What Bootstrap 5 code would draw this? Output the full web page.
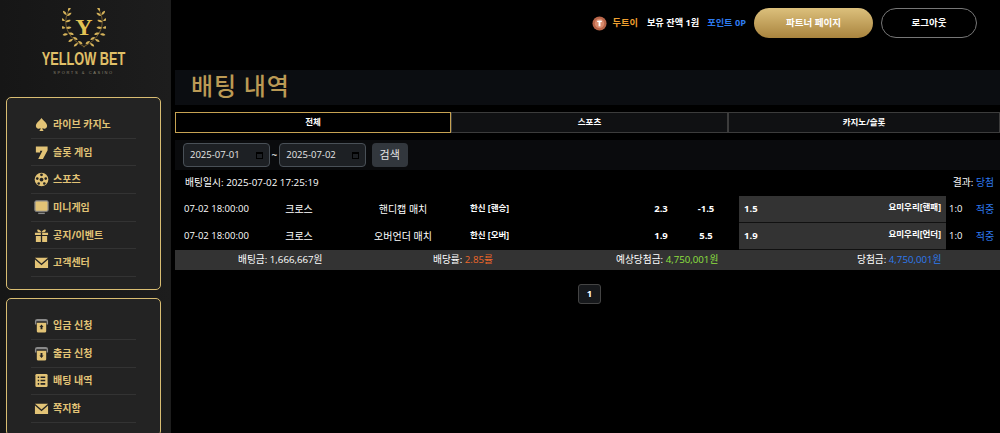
<!DOCTYPE html>
<html lang="ko">
<head>
  <meta charset="utf-8">
  <title>배팅 내역</title>
  <link href="https://cdn.jsdelivr.net/npm/bootstrap@5.3.3/dist/css/bootstrap.min.css" rel="stylesheet">
  <style>
    html, body { height: 433px; overflow: hidden; }
    body { background: #000; color: #fff; font-family: "Open Sans", "Noto Sans CJK KR", sans-serif; font-size: 9px; }
    .side-bar { width: 171px; height: 433px; flex: none; overflow: hidden; background: linear-gradient(90deg, #161616, #1d1d1d); padding: 0 10px 0 6px; }
    .logo-box { height: 97px; padding-top: 8px; text-align: center; }
    .logo-name { font-family: "Liberation Sans", sans-serif; font-weight: 700; font-size: 19px; line-height: 17px; color: #e0c068; transform: scaleX(.67); margin: 2px -10px 0; white-space: nowrap; }
    .logo-sub { font-family: "Liberation Sans", sans-serif; font-size: 4px; line-height: 6px; letter-spacing: 1.6px; color: #8c8672; margin-top: 3px; }
    .side-group { background: #232323; border: 1px solid #d9bd72; border-radius: 5px; padding: 13px 24px 12px; margin-bottom: 8px; }
    .side-link { display: flex; align-items: center; gap: 4px; height: 27.7px; color: #e2c376; font-size: 10px; font-weight: 700; text-decoration: none; border-bottom: 1px solid #333; white-space: nowrap; padding-left: 3px; }
    .side-link svg { width: 15px; height: 15px; flex: none; }
    .main-area { flex: 1; min-width: 0; padding-left: 4px; }
    .top-bar { height: 70px; padding: 8px 23px 32px 0; font-size: 9.2px; font-weight: 700; }
    .user-level { width: 15px; height: 15px; margin-right: 6px; }
    .txt-orange { color: #f0a030; }
    .txt-blue { color: #2e7bf0; }
    .user-name { margin-right: 9px; }
    .user-cash { margin-right: 8px; }
    .user-point { margin-right: 8px; }
    .btn-partner, .btn-logout { height: 30px; border-radius: 15px; font-size: 9.5px; font-weight: 700; color: #fff; padding: 0; display: flex; align-items: center; justify-content: center; }
    .btn-partner { width: 119px; margin-right: 8px; border: 0; background: linear-gradient(180deg, #dcc07c, #a9843e); }
    .btn-logout { width: 96px; background: #000; border: 1px solid #777; }
    .title-bar { height: 35px; background: #0b0d11; padding-left: 16px; color: #bb9a55; font-size: 24px; font-weight: 500; line-height: 32px; letter-spacing: .8px; }
    .tab-row { margin-top: 7px; height: 21px; }
    .tab-item { height: 21px; line-height: 17px; text-align: center; background: #101113; border: 1px solid #3c3c3c; font-size: 8.5px; font-weight: 700; color: #fff; }
    .tab-item.on { background: #000; border-color: #c6a252; }
    .tab-all { width: 276px; flex: none; }
    .tab-mid { width: 277px; flex: none; }
    .tab-other { flex: 1; }
    .filter-row { margin-top: 7px; height: 30px; background: #0a0b0d; padding-left: 8px; gap: 2px; font-size: 10px; }
    .date-box { width: 86.500px; height: 24px; background: #1d2024; border: 1px solid #495057; border-radius: 4px; padding: 0 6px; display: flex; align-items: center; justify-content: space-between; font-size: 9.5px; color: #e6e6e6; }
    .date-box i { display: block; width: 7px; height: 7px; border: 1px solid #000; border-top-width: 2px; }
    .btn-find { width: 36px; height: 24px; margin-left: 4px; background: #32373d; color: #e6e6e6; border: 0; border-radius: 4px; font-size: 11px; padding: 0; }
    .head-row { height: 26px; padding: 0 6px 0 10px; font-size: 9.8px; }
    .bet-row { height: 27px; font-size: 10px; }
    .cell-time { width: 93px; padding-left: 9px; flex: none; font-size: 9.5px; }
    .cell-kind { width: 62px; text-align: center; flex: none; }
    .cell-match { width: 123px; padding-left: 23px; text-align: center; flex: none; }
    .cell-pick { width: 187px; padding-left: 17px; flex: none; font-size: 8.5px; font-weight: 700; padding-bottom: 3px; }
    .cell-odd { width: 42px; text-align: center; flex: none; font-size: 9.5px; font-weight: 700; }
    .cell-line { width: 48px; margin-right: 9px; text-align: center; flex: none; font-size: 9.5px; font-weight: 700; }
    .cell-away { width: 207px; height: 27px; flex: none; background: #333; border-bottom: 1px solid #111; padding: 0 5px; font-weight: 700; font-size: 9.5px; display: flex; align-items: center; justify-content: space-between; }
    .cell-away span:last-child { font-size: 8.5px; padding-bottom: 3px; }
    .cell-score { width: 24px; flex: none; padding-left: 3px; font-size: 9.5px; }
    .cell-result { flex: 1; min-width: 0; text-align: center; color: #2e7bf0; white-space: nowrap; }
    .sum-row { height: 20px; background: #333; font-size: 9.7px; padding-left: 63px; }
    .sum-a { width: 195px; flex: none; white-space: nowrap; }
    .sum-b { width: 183px; flex: none; white-space: nowrap; }
    .sum-c { width: 241px; flex: none; white-space: nowrap; }
    .pager-box { margin-top: 14px; display: flex; justify-content: center; padding-left: 4px; }
    .pager-num { width: 23px; height: 20px; background: #17191c; border: 1px solid #444; border-radius: 3px; text-align: center; line-height: 18px; font-size: 9.5px; font-weight: 700; color: #fff; }
  </style>
</head>
<body>
<div class="d-flex">
  <aside class="side-bar">
    <div class="logo-box">
      <svg width="44" height="40" viewBox="0 0 44 40" style="display:block;margin:0 auto">
        <defs>
          <path id="leaf" d="M0 0 C1.800 -1.500 4 -1.500 5.500 0 C4 1.500 1.800 1.500 0 0z" fill="#d4b25a"/>
        </defs>
        <g id="wreathL">
          <path d="M7 2 C0 14 4 30 23 39" fill="none" stroke="#8a6f35" stroke-width=".8"/>
          <use href="#leaf" transform="translate(6 3) rotate(-60)"/>
          <use href="#leaf" transform="translate(4.500 7) rotate(-130)"/>
          <use href="#leaf" transform="translate(5 8) rotate(-35)"/>
          <use href="#leaf" transform="translate(3 13) rotate(-150)"/>
          <use href="#leaf" transform="translate(3.500 14) rotate(-20)"/>
          <use href="#leaf" transform="translate(3.500 20) rotate(-170)"/>
          <use href="#leaf" transform="translate(4 20) rotate(-5)"/>
          <use href="#leaf" transform="translate(6 26) rotate(170)"/>
          <use href="#leaf" transform="translate(6.500 25) rotate(15)"/>
          <use href="#leaf" transform="translate(11 31) rotate(150)"/>
          <use href="#leaf" transform="translate(11 29) rotate(30)"/>
          <use href="#leaf" transform="translate(16 35) rotate(140)"/>
          <use href="#leaf" transform="translate(16 33) rotate(35)"/>
        </g>
        <use href="#wreathL" transform="translate(44 0) scale(-1 1)"/>
        <text x="22" y="27" text-anchor="middle" fill="#e3c354" font-family="Liberation Serif" font-weight="700" font-size="24">Y</text>
      </svg>
      <div class="logo-name">YELLOW BET</div>
      <div class="logo-sub">SPORTS &amp; CASINO</div>
    </div>
    <div class="side-group">
      <a class="side-link" href="#"><svg viewBox="0 0 16 16" fill="#e2c376"><path d="M8 1C6 4 2 6 2 9.500a3 3 0 0 0 5 2.200C7 13 6.500 14 5.500 15h5C9.500 14 9 13 9 11.700a3 3 0 0 0 5-2.200C14 6 10 4 8 1z"/></svg>라이브 카지노</a>
      <a class="side-link" href="#"><svg viewBox="0 0 16 16" fill="#e2c376"><path d="M2 1.500h12.500v4L9.500 15H4.500l4.500-9H6.500v2H2z"/></svg>슬롯 게임</a>
      <a class="side-link" href="#"><svg viewBox="0 0 16 16"><circle cx="8" cy="8" r="7.300" fill="#e2c376"/><circle cx="8" cy="8" r="2" fill="#232323"/><circle cx="8" cy="3" r="1.500" fill="#232323"/><circle cx="3.500" cy="7" r="1.400" fill="#232323"/><circle cx="12.500" cy="7" r="1.400" fill="#232323"/><circle cx="5" cy="12.300" r="1.400" fill="#232323"/><circle cx="11" cy="12.300" r="1.400" fill="#232323"/></svg>스포츠</a>
      <a class="side-link" href="#"><svg viewBox="0 0 16 16"><rect x="1" y="1" width="14" height="11" rx="1.500" fill="#e2c376" stroke="#8a8a8a" stroke-width="1.300"/><rect x="4.500" y="13.500" width="7" height="1.500" fill="#8a8a8a"/></svg>미니게임</a>
      <a class="side-link" href="#"><svg viewBox="0 0 16 16" fill="#e2c376"><path d="M1 5h6.300v2.500H1zM8.700 5H15v2.500H8.700zM2 8.500h5.300V15H2zM8.700 8.500H14V15H8.700z"/><path d="M8 4.500C6 1 3 1 3.500 3S6 4.500 8 4.500C10 4.500 12 5 12.500 3S10 1 8 4.500z"/></svg>공지/이벤트</a>
      <a class="side-link" href="#"><svg viewBox="0 0 16 16" fill="#e2c376"><path d="M1 3h14l-7 6z"/><path d="M1 4.800v9h14v-9l-7 6z"/></svg>고객센터</a>
    </div>
    <div class="side-group">
      <a class="side-link" href="#"><svg viewBox="0 0 16 16"><path d="M3.500 1h9A2.500 2.500 0 0 1 15 3.500V7h-1.500V3.500h-11V7H1V3.500A2.500 2.500 0 0 1 3.500 1z" fill="#8a8a8a"/><path d="M3 5h10v9a1.500 1.500 0 0 1-1.500 1.500h-7A1.500 1.500 0 0 1 3 14z" fill="#e2c376"/><path d="M8 6.800l2.200 2.700H9V12H7V9.500H5.800z" fill="#232323"/></svg>입금 신청</a>
      <a class="side-link" href="#"><svg viewBox="0 0 16 16"><path d="M3.500 1h9A2.500 2.500 0 0 1 15 3.500V7h-1.500V3.500h-11V7H1V3.500A2.500 2.500 0 0 1 3.500 1z" fill="#8a8a8a"/><path d="M3 5h10v9a1.500 1.500 0 0 1-1.500 1.500h-7A1.500 1.500 0 0 1 3 14z" fill="#e2c376"/><path d="M8 12.800L5.800 10H7V7.500h2V10h1.200z" fill="#232323"/></svg>출금 신청</a>
      <a class="side-link" href="#"><svg viewBox="0 0 16 16"><rect x="1.500" y="1" width="13" height="14" rx="1.500" fill="#e2c376"/><path d="M4 4.500h1.500M7 4.500h5M4 8h1.500M7 8h5M4 11.500h1.500M7 11.500h5" stroke="#232323" stroke-width="1.800"/></svg>배팅 내역</a>
      <a class="side-link" href="#"><svg viewBox="0 0 16 16" fill="#e2c376"><path d="M1 3h14l-7 6z"/><path d="M1 4.800v9h14v-9l-7 6z"/></svg>쪽지함</a>
    </div>
  </aside>

  <main class="main-area">
    <div class="top-bar d-flex align-items-center justify-content-end">
      <svg class="user-level" viewBox="0 0 16 16"><circle cx="8" cy="8" r="7.500" fill="#b9664a"/><circle cx="8" cy="8" r="5" fill="#d98a6c"/><rect x="7" y="5" width="2" height="6" fill="#fff"/><rect x="5.500" y="5" width="5" height="1.500" fill="#fff"/></svg>
      <span class="txt-orange user-name">두트이</span>
      <span class="user-cash">보유 잔액 1원</span>
      <span class="txt-blue user-point">포인트 0P</span>
      <button class="btn-partner" type="button">파트너 페이지</button>
      <button class="btn-logout" type="button">로그아웃</button>
    </div>
    <div class="title-bar">배팅 내역</div>
    <div class="tab-row d-flex">
      <div class="tab-item tab-all on">전체</div>
      <div class="tab-item tab-mid">스포츠</div>
      <div class="tab-item tab-other">카지노/슬롯</div>
    </div>
    <div class="filter-row d-flex align-items-center">
      <div class="date-box">2025-07-01<i></i></div>
      <span>~</span>
      <div class="date-box">2025-07-02<i></i></div>
      <button class="btn-find" type="button">검색</button>
    </div>
    <div class="head-row d-flex align-items-center justify-content-between">
      <span>배팅일시: 2025-07-02 17:25:19</span>
      <span>결과: <span class="txt-blue">당첨</span></span>
    </div>
    <div class="bet-row d-flex align-items-center">
      <div class="cell-time">07-02 18:00:00</div>
      <div class="cell-kind">크로스</div>
      <div class="cell-match">핸디캡 매치</div>
      <div class="cell-pick">한신 [핸승]</div>
      <div class="cell-odd">2.3</div>
      <div class="cell-line">-1.5</div>
      <div class="cell-away"><span>1.5</span><span>요미우리[핸패]</span></div>
      <div class="cell-score">1:0</div>
      <div class="cell-result">적중</div>
    </div>
    <div class="bet-row d-flex align-items-center">
      <div class="cell-time">07-02 18:00:00</div>
      <div class="cell-kind">크로스</div>
      <div class="cell-match">오버언더 매치</div>
      <div class="cell-pick">한신 [오버]</div>
      <div class="cell-odd">1.9</div>
      <div class="cell-line">5.5</div>
      <div class="cell-away"><span>1.9</span><span>요미우리[언더]</span></div>
      <div class="cell-score">1:0</div>
      <div class="cell-result">적중</div>
    </div>
    <div class="sum-row d-flex align-items-center">
      <div class="sum-a">배팅금: 1,666,667원</div>
      <div class="sum-b">배당률: <span style="color:#f0682a">2.85률</span></div>
      <div class="sum-c">예상당첨금: <span style="color:#8fe040">4,750,001원</span></div>
      <div>당첨금: <span class="txt-blue">4,750,001원</span></div>
    </div>
    <div class="pager-box"><div class="pager-num">1</div></div>
  </main>
</div>
<script src="https://cdn.jsdelivr.net/npm/bootstrap@5.3.3/dist/js/bootstrap.bundle.min.js"></script>
</body>
</html>
